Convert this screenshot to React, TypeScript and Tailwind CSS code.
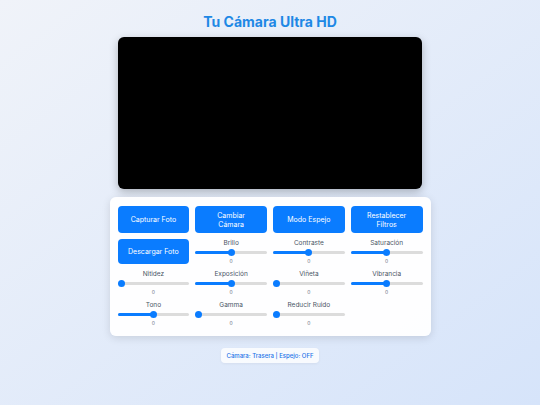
// App.tsx — camera control panel mock

const buttons = ["Capturar Foto", "Cambiar Cámara", "Modo Espejo", "Restablecer Filtros"];

type Slider = { label: string; pct: number };

const sliders: Slider[] = [
  { label: "Brillo", pct: 50 },
  { label: "Contraste", pct: 50 },
  { label: "Saturación", pct: 50 },
  { label: "Nitidez", pct: 0 },
  { label: "Exposición", pct: 50 },
  { label: "Viñeta", pct: 0 },
  { label: "Vibrancia", pct: 50 },
  { label: "Tono", pct: 50 },
  { label: "Gamma", pct: 0 },
  { label: "Reducir Ruido", pct: 0 },
];

function SliderCell({ s }: { s: Slider }) {
  return (
    <div className="flex flex-col items-center">
      <span className="text-[6.5px] leading-[8px] text-gray-600">{s.label}</span>
      <div className="relative mt-[2px] h-[7px] w-full flex items-center">
        <div className="h-[3px] w-full rounded-full bg-[#dcdcdc] overflow-hidden">
          <div className="h-full bg-[#0a7cff]" style={{ width: `${s.pct}%` }} />
        </div>
        <div
          className="absolute top-0 h-[7px] w-[7px] rounded-full bg-[#0a7cff]"
          style={{ left: `calc(${s.pct}% - ${(s.pct / 100) * 7}px)` }}
        />
      </div>
      <span className="mt-[2px] text-[5px] leading-[6px] text-gray-500">0</span>
    </div>
  );
}

export default function App() {
  return (
    <div
      className="min-h-[405px] w-full bg-gradient-to-br from-[#f0f3f9] to-[#d6e4fa] flex flex-col items-center pt-[12px]"
      style={{ fontFamily: "Inter, 'Noto Sans', sans-serif" }}
    >
      <h1 className="text-[14px] leading-[20px] font-bold text-[#1e88e5]">Tu Cámara Ultra HD</h1>

      <div className="mt-[5px] h-[152px] w-[304px] rounded-[6px] bg-black shadow-[0_3px_8px_rgba(0,0,0,0.25)]" />

      <div className="mt-[8px] w-[321px] rounded-[6px] bg-white/95 shadow-[0_2px_8px_rgba(0,0,0,0.12)] px-[8px] pt-[9px] pb-[10px]">
        <div className="grid grid-cols-4 gap-x-[6px] gap-y-[6px]">
          {buttons.map((b) => (
            <button
              key={b}
              className="h-[27px] rounded-[4px] bg-[#0a7cff] text-white text-[7px] leading-[9px] px-[10px]"
            >
              {b}
            </button>
          ))}
          <button className="h-[25px] rounded-[4px] bg-[#0a7cff] text-white text-[7px] leading-[9px]">
            Descargar Foto
          </button>
          {sliders.map((s) => (
            <SliderCell key={s.label} s={s} />
          ))}
        </div>
      </div>

      <div className="mt-[12px] rounded-[4px] bg-white/80 px-[6px] h-[15px] flex items-center text-[6px] font-medium text-[#1a73e8] shadow-[0_1px_3px_rgba(0,0,0,0.05)]">
        Cámara: Trasera | Espejo: OFF
      </div>
    </div>
  );
}
